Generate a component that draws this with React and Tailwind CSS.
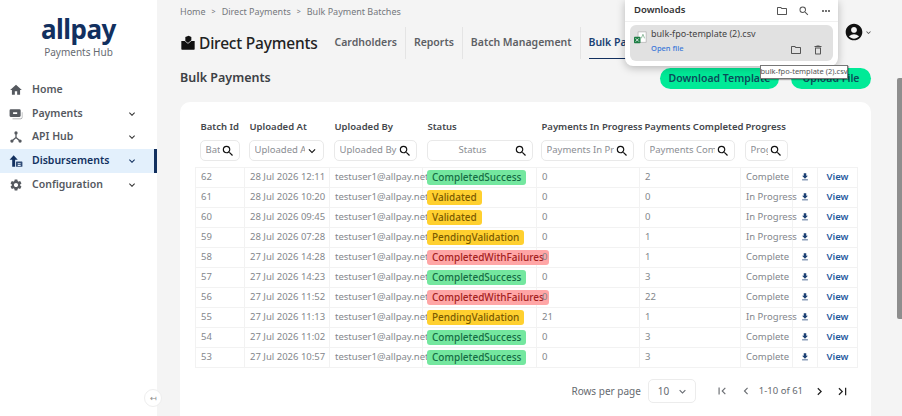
import React from "react";
import { MdHome, MdSearch, MdAccountCircle, MdSettings, MdKeyboardArrowDown, MdKeyboardArrowLeft, MdKeyboardArrowRight, MdFirstPage, MdLastPage, MdFileDownload, MdAccountTree, MdOutlineFolder, MdOutlineDelete, MdMoreHoriz, MdSchema } from "react-icons/md";

const rows = [
  ["62", "28 Jul 2026 12:11", "CompletedSuccess", "0", "2", "Complete"],
  ["61", "28 Jul 2026 10:20", "Validated", "0", "0", "In Progress"],
  ["60", "28 Jul 2026 09:45", "Validated", "0", "0", "In Progress"],
  ["59", "28 Jul 2026 07:28", "PendingValidation", "0", "1", "In Progress"],
  ["58", "27 Jul 2026 14:28", "CompletedWithFailures", "0", "1", "Complete"],
  ["57", "27 Jul 2026 14:23", "CompletedSuccess", "0", "3", "Complete"],
  ["56", "27 Jul 2026 11:52", "CompletedWithFailures", "0", "22", "Complete"],
  ["55", "27 Jul 2026 11:13", "PendingValidation", "21", "1", "In Progress"],
  ["54", "27 Jul 2026 11:02", "CompletedSuccess", "0", "3", "Complete"],
  ["53", "27 Jul 2026 10:57", "CompletedSuccess", "0", "3", "Complete"],
];

const statusClass = {
  CompletedSuccess: "bg-[#74e79f] text-[#146c43]",
  Validated: "bg-[#ffd02f] text-[#7a5a00]",
  PendingValidation: "bg-[#ffd02f] text-[#7a5a00]",
  CompletedWithFailures: "bg-[#ffa6a6] text-[#a32020]",
};

const filters = [
  ["Batch Id", "Batch Id", "w-[40px]", "search"],
  ["Uploaded At", "Uploaded At", "w-[75px]", "chevron"],
  ["Uploaded By", "Uploaded By", "w-[83px]", "search"],
  ["Status", "Status", "w-[106px]", "search"],
  ["Payments In Progress", "Payments In Progress", "w-[93px]", "search"],
  ["Payments Completed", "Payments Completed", "w-[91px]", "search"],
  ["Progress", "Progress", "w-[43px]", "search"],
];

const nav = [
  ["Home", MdHome, false],
  ["Payments", PaymentsIcon, true],
  ["API Hub", MdSchemaIcon, true],
  ["Disbursements", DisburseIcon, true],
  ["Configuration", MdSettings, true],
];

function PaymentsIcon({ className }) {
  return (
    <svg className={className} viewBox="0 0 24 24" fill="currentColor">
      <path d="M3 4h15a2 2 0 0 1 2 2v9a2 2 0 0 1-2 2H3a2 2 0 0 1-2-2V6a2 2 0 0 1 2-2zm4 5v3h7V9z" />
      <path d="M22 9h1v9a3 3 0 0 1-3 3H6v-1.500h14a2 2 0 0 0 2-2z" opacity="0.6" />
    </svg>
  );
}

function MdSchemaIcon({ className }) {
  return (
    <svg className={className} viewBox="0 0 24 24" fill="none" stroke="currentColor" strokeWidth="2.2">
      <path d="M12 6v7M12 13l-7 6M12 13l7 6" />
      <circle cx="12" cy="5" r="2.800" fill="currentColor" stroke="none" />
      <circle cx="5" cy="19" r="2.800" fill="currentColor" stroke="none" />
      <circle cx="19" cy="19" r="2.800" fill="currentColor" stroke="none" />
    </svg>
  );
}

function DisburseIcon({ className }) {
  return (
    <svg className={className} viewBox="0 0 24 24" fill="currentColor">
      <path d="M8 2l7 8h-4.500v12h-5V10H1z" />
      <path d="M13 13h9a1 1 0 0 1 1 1v7a1 1 0 0 1-1 1h-9a1 1 0 0 1-1-1v-7a1 1 0 0 1 1-1zm2 3v1.500h5V16zm0 3v1.500h5V19z" fillRule="evenodd" opacity="0.85" />
    </svg>
  );
}

function WalletIcon() {
  return (
    <svg className="w-[16px] h-[16px] shrink-0" viewBox="0 0 24 24" fill="#111">
      <path d="M2 9h5l5 4 5-4h5v12a1 1 0 0 1-1 1H3a1 1 0 0 1-1-1z" />
      <path d="M8 3l5-2 4 2v5l-5 4-4-3z" />
    </svg>
  );
}

function FileIcon() {
  return (
    <svg className="w-[13px] h-[13px] shrink-0" viewBox="0 0 16 16">
      <path d="M5 1h10v13H5z" fill="#fff" stroke="#b5b5b5" />
      <path d="M9 9l2-5 2 5" fill="none" stroke="#7fb08f" />
      <rect x="0" y="7" width="8" height="8" rx="1" fill="#1e7e45" />
      <path d="M2 9l4 4M6 9l-4 4" stroke="#fff" strokeWidth="1" />
    </svg>
  );
}

function Sidebar() {
  return (
    <aside className="w-[157px] shrink-0 bg-white flex flex-col">
      <div className="flex flex-col items-center pt-[12px] h-[78px]">
        <div className="text-[26px] leading-[34px] font-bold text-[#12305f] tracking-[-0.5px]">allpay</div>
        <div className="text-[10px] leading-[14px] text-[#666b72] mt-[-1px]">Payments Hub</div>
      </div>
      <nav className="flex flex-col">
        {nav.map(([label, Icon, hasChevron]) => {
          const active = label === "Disbursements";
          return (
            <div key={label} className={`flex items-center h-[23.7px] pl-[9px] pr-[19px] ${active ? "bg-[#e3f0fc] border-r-[3px] border-[#12305f] text-[#12305f]" : "text-[#55595f]"}`}>
              <Icon className="w-[14px] h-[14px] shrink-0" />
              <span className="ml-[9px] flex-1 text-[10.5px] font-semibold">{label}</span>
              {hasChevron && <MdKeyboardArrowDown className={`w-[12px] h-[12px] ${active ? "mr-[-3px] text-[#12305f]" : "text-[#333]"}`} />}
            </div>
          );
        })}
      </nav>
    </aside>
  );
}

function Header() {
  const tabs = ["Cardholders", "Reports", "Batch Management", "Bulk Payments", "Payments"];
  return (
    <div className="flex items-center h-[32px] mt-[9px]">
      <WalletIcon />
      <h1 className="ml-[3px] text-[15.500px] leading-[20px] text-[#222] font-medium whitespace-nowrap tracking-[-0.2px]">Direct Payments</h1>
      <div className="flex items-stretch ml-[9px] h-[32px]">
        {tabs.map((t) => (
          <div key={t} className="px-[8px] flex items-stretch border-r border-[#e4e4e4] last:border-r-0">
            <span className={`flex items-center text-[10.500px] font-semibold whitespace-nowrap ${t === "Bulk Payments" ? "text-[#1a3f73] border-b border-[#12305f]" : "text-[#5d6064]"}`}>{t}</span>
          </div>
        ))}
      </div>
    </div>
  );
}

function Filter({ placeholder, width, icon }) {
  return (
    <div className={`${width} h-[21px] flex items-center bg-white border border-[#e9e9e9] rounded-[5px] pl-[5px] pr-[4px]`}>
      <span className="flex-1 overflow-hidden whitespace-nowrap text-[9.500px] text-[#8b8e93]">{placeholder}</span>
      {icon === "search" ? <MdSearch className="w-[14px] h-[14px] shrink-0 text-[#111] ml-[1px]" /> : <MdKeyboardArrowDown className="w-[14px] h-[14px] shrink-0 text-[#111]" />}
    </div>
  );
}

function BatchTable() {
  return (
    <table className="table-fixed border-collapse w-[662px]">
      <colgroup>
        <col className="w-[49px]" />
        <col className="w-[85px]" />
        <col className="w-[93px]" />
        <col className="w-[114px]" />
        <col className="w-[103px]" />
        <col className="w-[101px]" />
        <col className="w-[52px]" />
        <col className="w-[25px]" />
        <col className="w-[40px]" />
      </colgroup>
      <thead>
        <tr className="h-[26px]">
          {filters.map(([label]) => (
            <th key={label} className="text-left align-middle pl-[5px] text-[9.500px] font-semibold text-[#44474c] whitespace-nowrap">{label}</th>
          ))}
          <th colSpan={2}></th>
        </tr>
        <tr className="h-[27px]">
          {filters.map(([label, placeholder, width, icon]) => (
            <th key={label} className="pl-[4px] align-top font-normal">
              <Filter placeholder={placeholder} width={width} icon={icon} />
            </th>
          ))}
          <th colSpan={2}></th>
        </tr>
      </thead>
      <tbody>
        {rows.map((r) => (
          <tr key={r[0]} className="h-[20px] text-[9.500px] text-[#84878c]">
            <td className="border border-[#f2f2f2] pl-[5px]">{r[0]}</td>
            <td className="border border-[#f2f2f2] pl-[5px] whitespace-nowrap">{r[1]}</td>
            <td className="border border-[#f2f2f2] pl-[5px] whitespace-nowrap">testuser1@allpay.net</td>
            <td className="border border-[#f2f2f2] pl-[4px]">
              <span className={`inline-block h-[15px] leading-[14px] rounded-[3px] px-[5px] text-[10px] font-medium align-middle ${statusClass[r[2]]}`}>{r[2]}</span>
            </td>
            <td className="border border-[#f2f2f2] pl-[5px]">{r[3]}</td>
            <td className="border border-[#f2f2f2] pl-[5px]">{r[4]}</td>
            <td className="border border-[#f2f2f2] pl-[5px] whitespace-nowrap">{r[5]}</td>
            <td className="border border-[#f2f2f2]">
              <MdFileDownload className="w-[10px] h-[10px] mx-auto text-[#1a3f73]" />
            </td>
            <td className="border border-[#f2f2f2] text-center text-[#1f5a9e] font-semibold">View</td>
          </tr>
        ))}
      </tbody>
    </table>
  );
}

function Pagination() {
  return (
    <div className="flex items-center justify-end h-[25px] mt-[11px] text-[#666a70] pr-[7px]">
      <span className="text-[10px]">Rows per page</span>
      <div className="ml-[7px] w-[48px] h-[24px] flex items-center justify-between border border-[#ececec] rounded-[5px] pl-[9px] pr-[6px] text-[10px]">
        <span>10</span>
        <MdKeyboardArrowDown className="w-[13px] h-[13px]" />
      </div>
      <MdFirstPage className="ml-[19px] w-[14px] h-[14px] text-[#6b6e73]" />
      <MdKeyboardArrowLeft className="ml-[10px] w-[14px] h-[14px] text-[#6b6e73]" />
      <span className="ml-[6px] text-[9.500px]">1-10 of 61</span>
      <MdKeyboardArrowRight className="ml-[9px] w-[15px] h-[15px] text-[#222]" />
      <MdLastPage className="ml-[8px] w-[15px] h-[15px] text-[#222]" />
    </div>
  );
}

function Downloads() {
  return (
    <div className="absolute left-[625px] top-0 w-[213px] h-[66px] bg-white rounded-b-[8px] shadow-[0_2px_8px_rgba(0,0,0,0.25)] z-10">
      <div className="flex items-center h-[22px] pl-[9px] pr-[6px] border-b border-[#f0f0f0]">
        <span className="flex-1 text-[9.500px] font-semibold text-[#333]">Downloads</span>
        <MdOutlineFolder className="w-[12px] h-[12px] text-[#555]" />
        <MdSearch className="ml-[10px] w-[12px] h-[12px] text-[#555]" />
        <MdMoreHoriz className="ml-[10px] w-[12px] h-[12px] text-[#555]" />
      </div>
      <div className="mx-[5px] mt-[3px] h-[36px] bg-[#e1e1e1] rounded-[6px] flex pl-[4px] pr-[9px]">
        <div className="pt-[6px]"><FileIcon /></div>
        <div className="ml-[4px] flex-1 pt-[2px]">
          <div className="text-[9px] leading-[14px] text-[#444]">bulk-fpo-template (2).csv</div>
          <div className="text-[7.500px] leading-[12px] text-[#3b78d8] font-medium mt-[1px]">Open file</div>
        </div>
        <div className="flex items-end gap-[10px] pb-[5px]">
          <MdOutlineFolder className="w-[12px] h-[12px] text-[#555]" />
          <MdOutlineDelete className="w-[12px] h-[12px] text-[#555]" />
        </div>
      </div>
    </div>
  );
}

function Tooltip() {
  return (
    <div className="absolute left-[760px] top-[65px] w-[88px] h-[14px] bg-white border border-[#777] shadow-[1px_1px_1px_rgba(0,0,0,0.3)] flex items-center justify-center z-20 text-[7.500px] text-[#555] whitespace-nowrap">
      bulk-fpo-template (2).csv
    </div>
  );
}

export default function App() {
  return (
    <div className="relative w-[902px] h-[416px] overflow-hidden flex bg-[#f4f4f4] font-['Noto_Sans','Open_Sans',sans-serif]">
      <Sidebar />
      <main className="flex-1 min-w-0 pl-[23px] pr-[23px] overflow-hidden">
        <div className="flex items-center h-[12px] mt-[6px] text-[9px] text-[#75787d] gap-[6px] whitespace-nowrap">
          <span>Home</span><span className="text-[7px]">&gt;</span>
          <span>Direct Payments</span><span className="text-[7px]">&gt;</span>
          <span>Bulk Payment Batches</span>
        </div>
        <Header />
        <div className="flex items-center justify-between h-[21px] mt-[9px]">
          <h2 className="text-[12.500px] font-semibold text-[#3c4045]">Bulk Payments</h2>
          <div className="flex gap-[12px]">
            <button className="w-[119px] h-[21px] rounded-full bg-[#00ea97] text-[10.500px] font-semibold text-[#0b4d5a]">Download Template</button>
            <button className="w-[80px] h-[21px] rounded-full bg-[#00ea97] text-[10.500px] font-semibold text-[#0b4d5a]">Upload File</button>
          </div>
        </div>
        <section className="mt-[13px] bg-white rounded-[10px] pl-[15px] pr-[14px] pt-[12px] h-[330px]">
          <BatchTable />
          <Pagination />
        </section>
      </main>
      <div className="w-[8px] shrink-0 bg-[#f4f4f4] pl-[3px] pt-[78px]">
        <div className="h-[241px] bg-[#8e8e8e] rounded-l-[2px]" />
      </div>
      <div className="absolute left-[844px] top-[22px] flex items-center z-0">
        <MdAccountCircle className="w-[20px] h-[20px] text-[#111]" />
        <MdKeyboardArrowDown className="w-[9px] h-[9px] text-[#444]" />
      </div>
      <div className="absolute left-[144px] top-[389px] w-[18px] h-[18px] rounded-full bg-white border border-[#eeeeee] flex items-center justify-center text-[8px] text-[#8a8a8a]">↤</div>
      <Downloads />
      <Tooltip />
    </div>
  );
}
